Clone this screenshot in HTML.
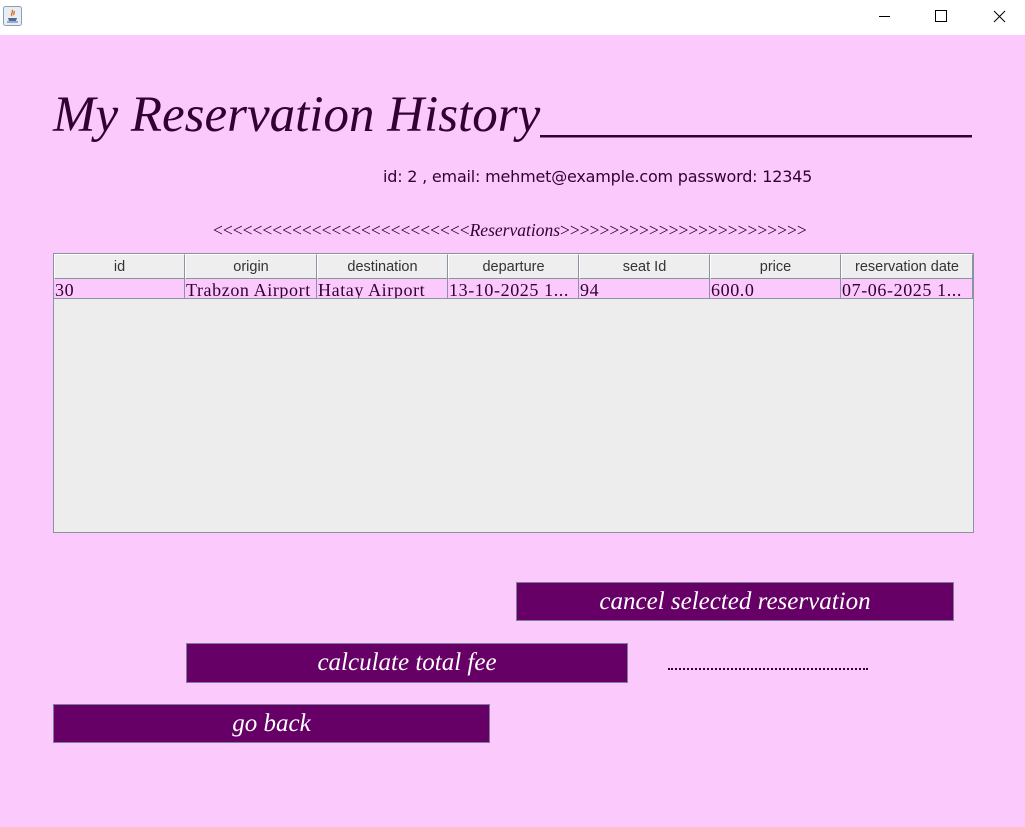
<!DOCTYPE html>
<html><head><meta charset="utf-8"><style>
*{margin:0;padding:0;box-sizing:border-box}
body{width:1025px;height:827px;background:#fbc9fc;position:relative;overflow:hidden;font-family:"Liberation Serif",serif}
.tb{position:absolute;left:0;top:0;width:1025px;height:35px;background:#fff}
.abs{position:absolute}
.title{left:53px;top:86px;font-style:italic;font-size:51px;color:#330033;white-space:nowrap}
.info{left:383px;top:167px;font-family:"DejaVu Sans","Liberation Sans",sans-serif;font-size:16px;color:#330033;letter-spacing:-0.2px}
.res{left:213px;top:220px;font-size:17.5px;color:#330033;white-space:nowrap}
.table{left:53px;top:253px;width:921px;height:280px;background:#ededed;border:1px solid #8a94a0}
.hc{position:absolute;top:0;height:25px;background:#eeeeee;border-right:1px solid #8a94a0;border-bottom:1px solid #8a94a0;border-top:1px solid #fff;border-left:1px solid #fff;font-family:"Liberation Sans",sans-serif;font-size:14.5px;color:#333;text-align:center;line-height:25px}
.rc{position:absolute;top:25px;height:20px;background:#fbc9fc;border-right:1px solid #8a94a0;border-bottom:1px solid #8a94a0;font-size:18px;letter-spacing:0.6px;color:#330033;line-height:22px;padding-left:1px;white-space:nowrap;overflow:hidden}
.btn{position:absolute;background:#660066;border:1px solid #7a7f9a;color:#fff;font-style:italic;font-size:25px;text-align:center;line-height:38px}
</style></head><body>
<div class="tb">
<svg class="abs" style="left:3px;top:6px" width="19" height="20"><rect x="0.5" y="0.5" width="18" height="19" rx="2" fill="#e8eef4" stroke="#8aa0b8"/><path d="M9 4c2 2-2 4 0 6M11 5c1 1-1 3 0 4" stroke="#e07020" fill="none" stroke-width="1.4"/><path d="M5 12h9l-1 3H6z" fill="#4a6a9a"/><path d="M4 16h11" stroke="#4a6a9a"/></svg>
<svg class="abs" style="left:876px;top:10px" width="130" height="14"><path d="M3 6.5h11" stroke="#000"/><rect x="59.5" y="0.5" width="11" height="11" fill="none" stroke="#000"/><path d="M118 1l11 11M129 1l-11 11" stroke="#000"/></svg>
</div>
<div class="abs title">My Reservation History<span style="display:inline-block;width:432px;overflow:hidden;vertical-align:bottom">____________________</span></div>
<div class="abs info">id: 2 , email: mehmet@example.com password: 12345</div>
<div class="abs res">&lt;&lt;&lt;&lt;&lt;&lt;&lt;&lt;&lt;&lt;&lt;&lt;&lt;&lt;&lt;&lt;&lt;&lt;&lt;&lt;&lt;&lt;&lt;&lt;&lt;&lt;<i>Reservations</i>&gt;&gt;&gt;&gt;&gt;&gt;&gt;&gt;&gt;&gt;&gt;&gt;&gt;&gt;&gt;&gt;&gt;&gt;&gt;&gt;&gt;&gt;&gt;&gt;&gt;</div>
<div class="abs table">
<div class="hc" style="left:0;width:131px">id</div>
<div class="hc" style="left:131px;width:132px">origin</div>
<div class="hc" style="left:263px;width:131px">destination</div>
<div class="hc" style="left:394px;width:131px">departure</div>
<div class="hc" style="left:525px;width:131px">seat Id</div>
<div class="hc" style="left:656px;width:131px">price</div>
<div class="hc" style="left:787px;width:132px">reservation date</div>
<div class="rc" style="left:0;width:131px">30</div>
<div class="rc" style="left:131px;width:132px">Trabzon Airport</div>
<div class="rc" style="left:263px;width:131px">Hatay Airport</div>
<div class="rc" style="left:394px;width:131px">13-10-2025 1...</div>
<div class="rc" style="left:525px;width:131px">94</div>
<div class="rc" style="left:656px;width:131px">600.0</div>
<div class="rc" style="left:787px;width:132px">07-06-2025 1...</div>
</div>
<div class="btn" style="left:516px;top:582px;width:438px;height:39px">cancel selected reservation</div>
<div class="btn" style="left:186px;top:643px;width:442px;height:40px">calculate total fee</div>
<div class="abs" style="left:668px;top:668px;width:200px;border-top:2px dotted #330033"></div>
<div class="btn" style="left:53px;top:704px;width:437px;height:39px">go back</div>
</body></html>
